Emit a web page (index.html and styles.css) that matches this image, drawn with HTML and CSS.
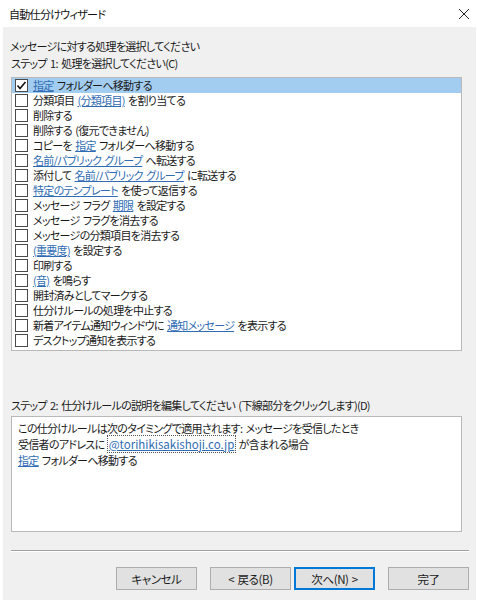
FILE: index.html
```html
<!DOCTYPE html>
<html lang="ja">
<head>
    <meta charset="UTF-8">
    <meta name="viewport" content="width=device-width, initial-scale=1.0">
    <title>自動仕分けウィザード</title>
    <link rel="stylesheet" href="styles.css">
</head>
<body>
    <div class="window">
        <div class="titlebar">
            <span class="title">自動仕分けウィザード</span>
            <span class="close" aria-label="閉じる">
                <svg width="12" height="12" viewBox="0 0 12 12">
                    <path d="M1 1 L11 11 M11 1 L1 11" stroke="#222" stroke-width="1" fill="none"/>
                </svg>
            </span>
        </div>

        <div class="client">
            <div class="label label-first">メッセージに対する処理を選択してください</div>
            <div class="label">ステップ 1: 処理を選択してください(C)</div>

            <div class="listbox">
                <div class="row selected">
                    <span class="check">
                        <svg width="11" height="11" viewBox="0 0 11 11">
                            <path d="M1.5 5.5 L4 8.5 L9.5 2" stroke="#111" stroke-width="1.6" fill="none"/>
                        </svg>
                    </span>
                    <span class="text"><a class="link">指定</a> フォルダーへ移動する</span>
                </div>
                <div class="row"><span class="check"></span><span class="text">分類項目 <a class="link">(分類項目)</a> を割り当てる</span></div>
                <div class="row"><span class="check"></span><span class="text">削除する</span></div>
                <div class="row"><span class="check"></span><span class="text">削除する (復元できません)</span></div>
                <div class="row"><span class="check"></span><span class="text">コピーを <a class="link">指定</a> フォルダーへ移動する</span></div>
                <div class="row"><span class="check"></span><span class="text"><a class="link">名前/パブリック グループ</a> へ転送する</span></div>
                <div class="row"><span class="check"></span><span class="text">添付して <a class="link">名前/パブリック グループ</a> に転送する</span></div>
                <div class="row"><span class="check"></span><span class="text"><a class="link">特定のテンプレート</a> を使って返信する</span></div>
                <div class="row"><span class="check"></span><span class="text">メッセージ フラグ <a class="link">期限</a> を設定する</span></div>
                <div class="row"><span class="check"></span><span class="text">メッセージ フラグを消去する</span></div>
                <div class="row"><span class="check"></span><span class="text">メッセージの分類項目を消去する</span></div>
                <div class="row"><span class="check"></span><span class="text"><a class="link">(重要度)</a> を設定する</span></div>
                <div class="row"><span class="check"></span><span class="text">印刷する</span></div>
                <div class="row"><span class="check"></span><span class="text"><a class="link">(音)</a> を鳴らす</span></div>
                <div class="row"><span class="check"></span><span class="text">開封済みとしてマークする</span></div>
                <div class="row"><span class="check"></span><span class="text">仕分けルールの処理を中止する</span></div>
                <div class="row"><span class="check"></span><span class="text">新着アイテム通知ウィンドウに <a class="link">通知メッセージ</a> を表示する</span></div>
                <div class="row"><span class="check"></span><span class="text">デスクトップ通知を表示する</span></div>
            </div>

            <div class="label label-step2">ステップ 2: 仕分けルールの説明を編集してください (下線部分をクリックします)(D)</div>

            <div class="description">
                <div class="desc-line">この仕分けルールは次のタイミングで適用されます: メッセージを受信したとき</div>
                <div class="desc-line">受信者のアドレスに <a class="link focused">@torihikisakishoji.co.jp</a> が含まれる場合</div>
                <div class="desc-line"><a class="link">指定</a> フォルダーへ移動する</div>
            </div>

            <div class="separator"></div>

            <div class="buttons">
                <button class="btn">キャンセル</button>
                <button class="btn btn-back">&lt; 戻る(B)</button>
                <button class="btn btn-default">次へ(N) &gt;</button>
                <button class="btn btn-finish">完了</button>
            </div>
        </div>
    </div>
</body>
</html>
```

FILE: styles.css
```css
body {
    margin: 0;
    background: #ffffff;
    font-family: "Noto Sans CJK JP", "Noto Sans", sans-serif;
    font-size: 11px;
    letter-spacing: -0.7px;
    word-spacing: 1.5px;
    font-feature-settings: "palt";
    color: #1a1a1a;
}
.window {
    width: 477px;
    height: 600px;
    display: flex;
    flex-direction: column;
}
.titlebar {
    height: 27px;
    display: flex;
    align-items: center;
    justify-content: space-between;
    padding: 0 6px 0 9px;
    box-sizing: border-box;
    background: #ffffff;
}
.title {
    line-height: 14px;
    color: #111;
}
.close {
    display: flex;
    width: 14px;
    height: 14px;
    align-items: center;
    justify-content: center;
}
.client {
    flex: 1;
    margin: 0 1px 0 3px;
    background: #f0f0f0;
    padding: 12px 7px 0 8px;
    display: flex;
    flex-direction: column;
}
.label {
    line-height: 14px;
    height: 14px;
    margin-bottom: 3px;
    white-space: nowrap;
}
.label-first {
    margin-left: -1px;
}
.listbox {
    margin-top: 4px;
    width: 451px;
    height: 274px;
    box-sizing: border-box;
    background: #ffffff;
    border: 1px solid #b9b9b9;
    display: flex;
    flex-direction: column;
}
.row {
    height: 15px;
    display: flex;
    align-items: center;
    padding-left: 3px;
    white-space: nowrap;
}
.row.selected {
    background: #a2cdf0;
}
.text {
    line-height: 13px;
}
.check {
    width: 11px;
    height: 11px;
    border: 1px solid #4a4a4a;
    background: #ffffff;
    margin-right: 5px;
    flex: none;
    display: flex;
    align-items: center;
    justify-content: center;
}
.link {
    color: #2f6cb3;
    text-decoration: underline;
    text-underline-offset: 1px;
}
/* the address link holds keyboard focus, hence the dotted box */
.focused {
    outline: 1px dotted #555;
    outline-offset: 0;
    padding: 0 1px;
    letter-spacing: 0;
    font-size: 11.5px;
}
.label-step2 {
    margin-top: 47px;
}
.description {
    margin-top: 1px;
    width: 451px;
    height: 116px;
    box-sizing: border-box;
    background: #ffffff;
    border: 1px solid #b9b9b9;
    padding: 4px 6px;
}
.desc-line {
    line-height: 14px;
    height: 14px;
    margin-bottom: 2px;
    white-space: nowrap;
}
.separator {
    margin-top: 18px;
    width: 458px;
    border-top: 1px solid #a0a0a0;
    border-bottom: 1px solid #ffffff;
}
.buttons {
    margin-top: 15px;
    display: flex;
    justify-content: flex-end;
}
.btn {
    width: 81px;
    height: 23px;
    box-sizing: border-box;
    background: #e1e1e1;
    border: 1px solid #adadad;
    font-family: inherit;
    font-size: 11.5px;
    letter-spacing: -0.4px;
    word-spacing: 1px;
    font-feature-settings: "palt";
    color: #1a1a1a;
    padding: 0;
}
.btn-back {
    margin-left: 13px;
}
.btn-default {
    margin-left: 3px;
    border: 2px solid #0078d7;
}
.btn-finish {
    margin-left: 13px;
}
```
